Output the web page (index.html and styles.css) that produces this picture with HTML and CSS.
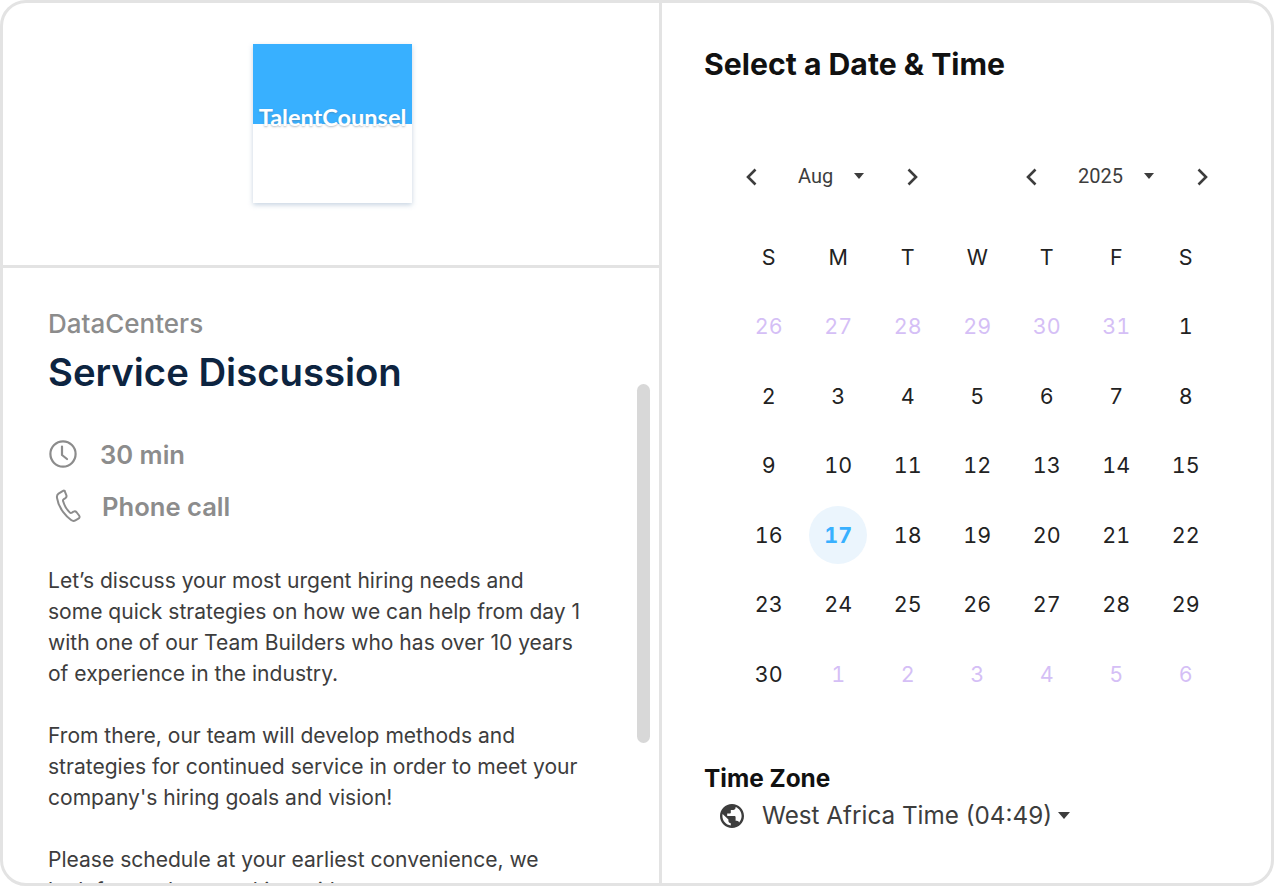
FILE: index.html
```html
<!DOCTYPE html>
<html>
<head>
    <meta charset="UTF-8">
    <meta name="viewport" content="width=device-width, initial-scale=1.0">
    <title>Select a Date &amp; Time</title>
    <link rel="stylesheet" href="styles.css">
</head>
<body>
    <div class="card">
        <div class="left">
            <div class="logo-row">
                <div class="logo">
                    <div class="logo-top"></div>
                    <div class="logo-name">TalentCounsel</div>
                </div>
            </div>
            <div class="details">
                <div class="scroll-thumb"></div>
                <div class="company">DataCenters</div>
                <h1 class="event-title">Service Discussion</h1>
                <div class="meta meta-time">
                    <svg class="meta-icon" width="30" height="30" viewBox="0 0 30 30" fill="none" stroke="#8c8c8c" stroke-width="2.2" stroke-linecap="round" stroke-linejoin="round">
                        <circle cx="15" cy="15" r="12.6"/>
                        <path d="M14 7.500v8.500l5 4"/>
                    </svg>
                    <span>30 min</span>
                </div>
                <div class="meta meta-phone">
                    <svg class="meta-icon" width="29" height="34" viewBox="0 0 32 36" fill="none" stroke="#8c8c8c" stroke-width="2.2" stroke-linecap="round" stroke-linejoin="round">
                        <path d="M9.500 1.500 5 4.300C3.400 5.400 3 7 3.300 9c.9 6 3.200 11 6.900 15.700 2.600 3.400 5.500 6.500 8.700 8.800 1.500 1.100 3.100 1.300 4.700.4l3.300-1.900c1.400-.8 1.700-2.300.8-3.500l-2.800-3.600c-.9-1.100-2.200-1.400-3.400-.6l-1.700 1c-.9.5-1.800.4-2.500-.3-1.800-1.800-3.300-3.800-4.600-6-1.200-2.100-2.100-4.200-2.700-6.400-.3-1 .1-1.800.9-2.300l1.700-1c1.200-.8 1.500-2 1-3.400l-1.800-4.200C12.300 1 10.900.7 9.500 1.500z"/>
                    </svg>
                    <span>Phone call</span>
                </div>
                <p class="desc">Let’s discuss your most urgent hiring needs and some quick strategies on how we can help from day 1 with one of our Team Builders who has over 10 years of experience in the industry.</p>
                <p class="desc">From there, our team will develop methods and strategies for continued service in order to meet your company's hiring goals and vision!</p>
                <p class="desc">Please schedule at your earliest convenience, we look forward to speaking with you.</p>
            </div>
        </div>
        <div class="right">
            <h2 class="picker-title">Select a Date &amp; Time</h2>
            <div class="nav">
                <div class="nav-group">
                    <svg class="chev" width="12" height="18" viewBox="0 0 12 18" fill="none" stroke="#3d3d3d" stroke-width="2.6"><path d="M10.500 1.500 3 9l7.500 7.500"/></svg>
                    <span class="nav-label nav-month">Aug</span>
                    <span class="caret"></span>
                    <svg class="chev" width="12" height="18" viewBox="0 0 12 18" fill="none" stroke="#3d3d3d" stroke-width="2.6"><path d="M1.500 1.500 9 9l-7.500 7.500"/></svg>
                </div>
                <div class="nav-group">
                    <svg class="chev" width="12" height="18" viewBox="0 0 12 18" fill="none" stroke="#3d3d3d" stroke-width="2.6"><path d="M10.500 1.500 3 9l7.500 7.500"/></svg>
                    <span class="nav-label nav-year">2025</span>
                    <span class="caret"></span>
                    <svg class="chev" width="12" height="18" viewBox="0 0 12 18" fill="none" stroke="#3d3d3d" stroke-width="2.6"><path d="M1.500 1.500 9 9l-7.500 7.500"/></svg>
                </div>
            </div>
            <div class="calendar">
                <div class="dow">S</div><div class="dow">M</div><div class="dow">T</div><div class="dow">W</div><div class="dow">T</div><div class="dow">F</div><div class="dow">S</div>
                <div class="day muted">26</div><div class="day muted">27</div><div class="day muted">28</div><div class="day muted">29</div><div class="day muted">30</div><div class="day muted">31</div><div class="day">1</div>
                <div class="day">2</div><div class="day">3</div><div class="day">4</div><div class="day">5</div><div class="day">6</div><div class="day">7</div><div class="day">8</div>
                <div class="day">9</div><div class="day">10</div><div class="day">11</div><div class="day">12</div><div class="day">13</div><div class="day">14</div><div class="day">15</div>
                <div class="day">16</div><div class="day today"><span>17</span></div><div class="day">18</div><div class="day">19</div><div class="day">20</div><div class="day">21</div><div class="day">22</div>
                <div class="day">23</div><div class="day">24</div><div class="day">25</div><div class="day">26</div><div class="day">27</div><div class="day">28</div><div class="day">29</div>
                <div class="day">30</div><div class="day muted">1</div><div class="day muted">2</div><div class="day muted">3</div><div class="day muted">4</div><div class="day muted">5</div><div class="day muted">6</div>
            </div>
            <div class="tz-title">Time Zone</div>
            <div class="tz">
                <svg class="globe" width="24" height="24" viewBox="0 0 24 24"><path fill="#3d3d3d" d="M12 0C5.400 0 0 5.400 0 12s5.400 12 12 12 12-5.400 12-12S18.600 0 12 0zM2.400 12c0-.7.100-1.500.200-2.100L8.400 15.600v1.200c0 1.300 1.100 2.400 2.400 2.400v2.300C6.100 20.900 2.400 16.900 2.400 12zm16.700 6.500c-.3-1-1.200-1.700-2.300-1.700h-1.200v-3.600c0-.7-.5-1.200-1.200-1.200H7.200V9.600h2.400c.7 0 1.200-.5 1.200-1.200V6h2.400c1.300 0 2.400-1.100 2.400-2.400v-.5c3.500 1.400 6 4.800 6 8.900 0 2.500-1 4.800-2.500 6.500z"/></svg>
                <span class="tz-name">West Africa Time (04:49)</span>
                <span class="caret caret-tz"></span>
            </div>
        </div>
    </div>
</body>
</html>
```

FILE: styles.css
```css
* {
    box-sizing: border-box;
}

body {
    margin: 0;
    font-family: "Inter", sans-serif;
    background-color: #fff;
}

.card {
    display: flex;
    width: 1274px;
    height: 886px;
    border: 3px solid #e3e3e3;
    border-radius: 26px;
    overflow: hidden;
}

.left {
    width: 659px;
    height: 100%;
    border-right: 3px solid #e3e3e3;
    display: flex;
    flex-direction: column;
}

.logo-row {
    height: 265px;
    flex-shrink: 0;
    border-bottom: 3px solid #e3e3e3;
    padding-top: 41px;
    padding-left: 250px;
}

.logo {
    position: relative;
    width: 159px;
    height: 159px;
    background-color: #fff;
    box-shadow: 0 2px 5px rgba(130, 160, 190, 0.45);
}

.logo-top {
    height: 80px;
    background-color: #38b0ff;
}

.logo-name {
    position: absolute;
    left: 0;
    right: 0;
    top: 59px;
    text-align: center;
    font-family: "Lato", sans-serif;
    font-weight: 700;
    font-size: 23.5px;
    color: #fff;
    text-shadow: 0 1px 2px rgba(90, 110, 130, 0.45);
}

.details {
    position: relative;
    flex: 1;
    overflow: hidden;
    padding: 40px 45px 0;
}

.scroll-thumb {
    position: absolute;
    left: 634px;
    top: 116px;
    width: 13px;
    height: 359px;
    border-radius: 7px;
    background-color: #d8d8d8;
}

.company {
    font-size: 26px;
    font-weight: 500;
    line-height: 32px;
    color: #8c8c8c;
}

.event-title {
    margin: 8px 0 0;
    font-size: 38.3px;
    font-weight: 600;
    line-height: 48px;
    color: #0d2440;
}

.meta {
    display: flex;
    align-items: center;
    font-size: 25.6px;
    font-weight: 600;
    color: #8c8c8c;
}

.meta-time {
    margin-top: 40px;
    height: 36px;
    gap: 22px;
}

.meta-phone {
    margin-top: 16px;
    height: 36px;
    gap: 19px;
    padding-left: 6px;
}

.desc {
    margin: 0 0 31px;
    width: 535px;
    font-size: 21.05px;
    line-height: 31px;
    color: #3d3d3d;
}

.meta-phone + .desc {
    margin-top: 41px;
}

.right {
    flex: 1;
    padding: 0 0 0 42px;
}

.picker-title {
    margin: 41px 0 0;
    font-size: 30.2px;
    font-weight: 700;
    line-height: 40px;
    color: #111;
}

.nav {
    display: flex;
    margin-top: 80px;
    padding-left: 41px;
    gap: 106px;
    height: 26px;
    align-items: center;
}

.nav-group {
    display: flex;
    align-items: center;
}

.nav-label {
    margin-left: 41px;
    margin-bottom: 2px;
    font-family: "Roboto", sans-serif;
    font-size: 20px;
    color: #3d3d3d;
}

.nav-month {
    width: 56px;
}

.nav-year {
    width: 66px;
}

.caret {
    display: inline-block;
    width: 0;
    height: 0;
    border-left: 5.5px solid transparent;
    border-right: 5.5px solid transparent;
    border-top: 6px solid #3d3d3d;
    margin-right: 43px;
    margin-bottom: 2px;
}

.calendar {
    display: grid;
    grid-template-columns: repeat(7, 69.5px);
    grid-auto-rows: 69.5px;
    margin-top: 32px;
    margin-left: 30px;
}

.dow,
.day {
    display: flex;
    align-items: center;
    justify-content: center;
    font-size: 21.5px;
    font-weight: 380;
    font-variant-numeric: tabular-nums;
    color: #222;
}

.muted {
    color: #d5bff6;
}

.today span {
    display: flex;
    align-items: center;
    justify-content: center;
    width: 58px;
    height: 58px;
    border-radius: 50%;
    background-color: #ebf5fd;
    color: #38b0ff;
    font-weight: 700;
}

.tz-title {
    margin-top: 53px;
    font-size: 24.4px;
    font-weight: 700;
    line-height: 32px;
    color: #111;
}

.tz {
    display: flex;
    align-items: center;
    margin-top: 5px;
    padding-left: 16px;
    height: 34px;
}

.tz-name {
    margin-left: 18px;
    font-size: 24.25px;
    color: #3d3d3d;
}

.caret-tz {
    margin: 0 0 0 6px;
    border-left-width: 6px;
    border-right-width: 6px;
    border-top-width: 7px;
}
```
